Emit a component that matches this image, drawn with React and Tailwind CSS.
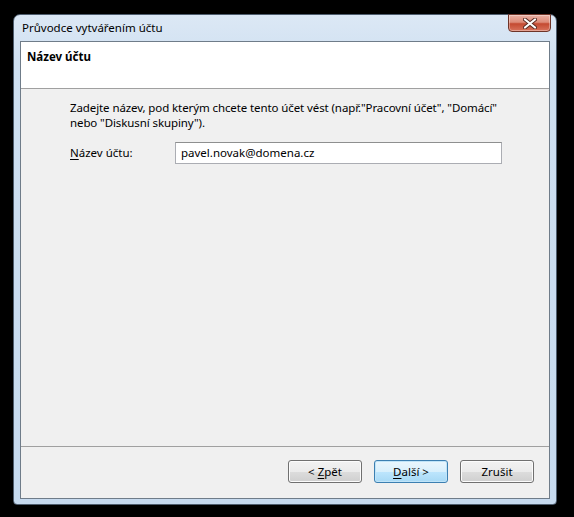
import React from 'react';

const font = { fontFamily: '"Segoe UI", "Noto Sans", "Open Sans", sans-serif' };

function CloseButton() {
  return (
    <div className="mt-[-1px] mr-[-1px] w-[43px] h-[18px] rounded-b-[4px] border border-[#6e3428] bg-[linear-gradient(to_bottom,#eab0a3_0%,#de8c79_45%,#c44a31_55%,#d8735c_100%)] flex items-center justify-center shadow-[inset_0_0_0_1px_rgba(255,255,255,0.35)]">
      <svg width="14" height="11" viewBox="0 0 14 11">
        <path d="M2 1.5 L12 9.5 M12 1.5 L2 9.5" stroke="#5a2a22" strokeWidth="4" strokeLinecap="round" />
        <path d="M2 1.5 L12 9.5 M12 1.5 L2 9.5" stroke="#ffffff" strokeWidth="2.2" strokeLinecap="round" />
      </svg>
    </div>
  );
}

function Button({ children, primary }) {
  const base = 'w-[74px] h-[23px] rounded-[3px] border text-[11.5px] text-black flex items-center justify-center';
  const look = primary
    ? 'border-[#3c7fb1] bg-[linear-gradient(to_bottom,#eaf6fd_0%,#d9f0fc_50%,#bee6fd_50%,#a7d9f5_100%)] shadow-[inset_0_0_0_1px_#c0e4f8]'
    : 'border-[#707070] bg-[linear-gradient(to_bottom,#f2f2f2_0%,#ebebeb_50%,#dddddd_50%,#cfcfcf_100%)] shadow-[inset_0_0_0_1px_#fcfcfc]';
  return <div className={`${base} ${look}`}>{children}</div>;
}

export default function App() {
  return (
    <div className="w-[574px] h-[517px] bg-black pt-[14px] pl-[13px]" style={font}>
      <div className="w-[544px] h-[491px] rounded-t-[7px] rounded-b-[4px] border border-[#4e5d6e] bg-[linear-gradient(to_bottom,#dce8f5_0%,#cfe0f1_10%,#c6daef_100%)] flex flex-col px-[6px] pb-[5px]">
        {/* title bar */}
        <div className="h-[26px] flex items-start justify-between">
          <div className="pl-[2px] pt-[5px] text-[11.5px] leading-[15px] text-black">Průvodce vytvářením účtu</div>
          <CloseButton />
        </div>

        {/* client */}
        <div className="flex-1 flex flex-col border border-[#6f7c89] bg-[#f0f0f0]">
          <div className="h-[47px] bg-white border-b border-[#a0a0a0] pl-[6px] pt-[7px]">
            <div className="text-[11.5px] leading-[15px] font-bold text-black">Název účtu</div>
          </div>

          <div className="flex-1 pl-[49px] pt-[11px]">
            <p className="text-[11.5px] leading-[15px] tracking-[-0.1px] text-black">
              Zadejte název, pod kterým chcete tento účet vést (např."Pracovní účet", "Domácí"
              <br />
              nebo "Diskusní skupiny").
            </p>
            <div className="mt-[12px] flex items-center">
              <div className="w-[105px] text-[11.5px] text-black">
                <span className="underline underline-offset-2">N</span>ázev účtu:
              </div>
              <div className="w-[327px] h-[22px] border border-[#abadb3] border-t-[#8e8f8f] bg-white pl-[5px] flex items-center text-[11.5px] text-black">
                pavel.novak@domena.cz
              </div>
            </div>
          </div>

          <div className="border-t border-[#a0a0a0] h-[52px] flex justify-end items-start gap-[12px] pt-[13px] pr-[15px]">
            <Button>&lt; <span className="underline underline-offset-2 ml-[3px]">Z</span>pět</Button>
            <Button primary><span className="underline underline-offset-2">D</span>alší &gt;</Button>
            <Button>Zrušit</Button>
          </div>
        </div>
      </div>
    </div>
  );
}
